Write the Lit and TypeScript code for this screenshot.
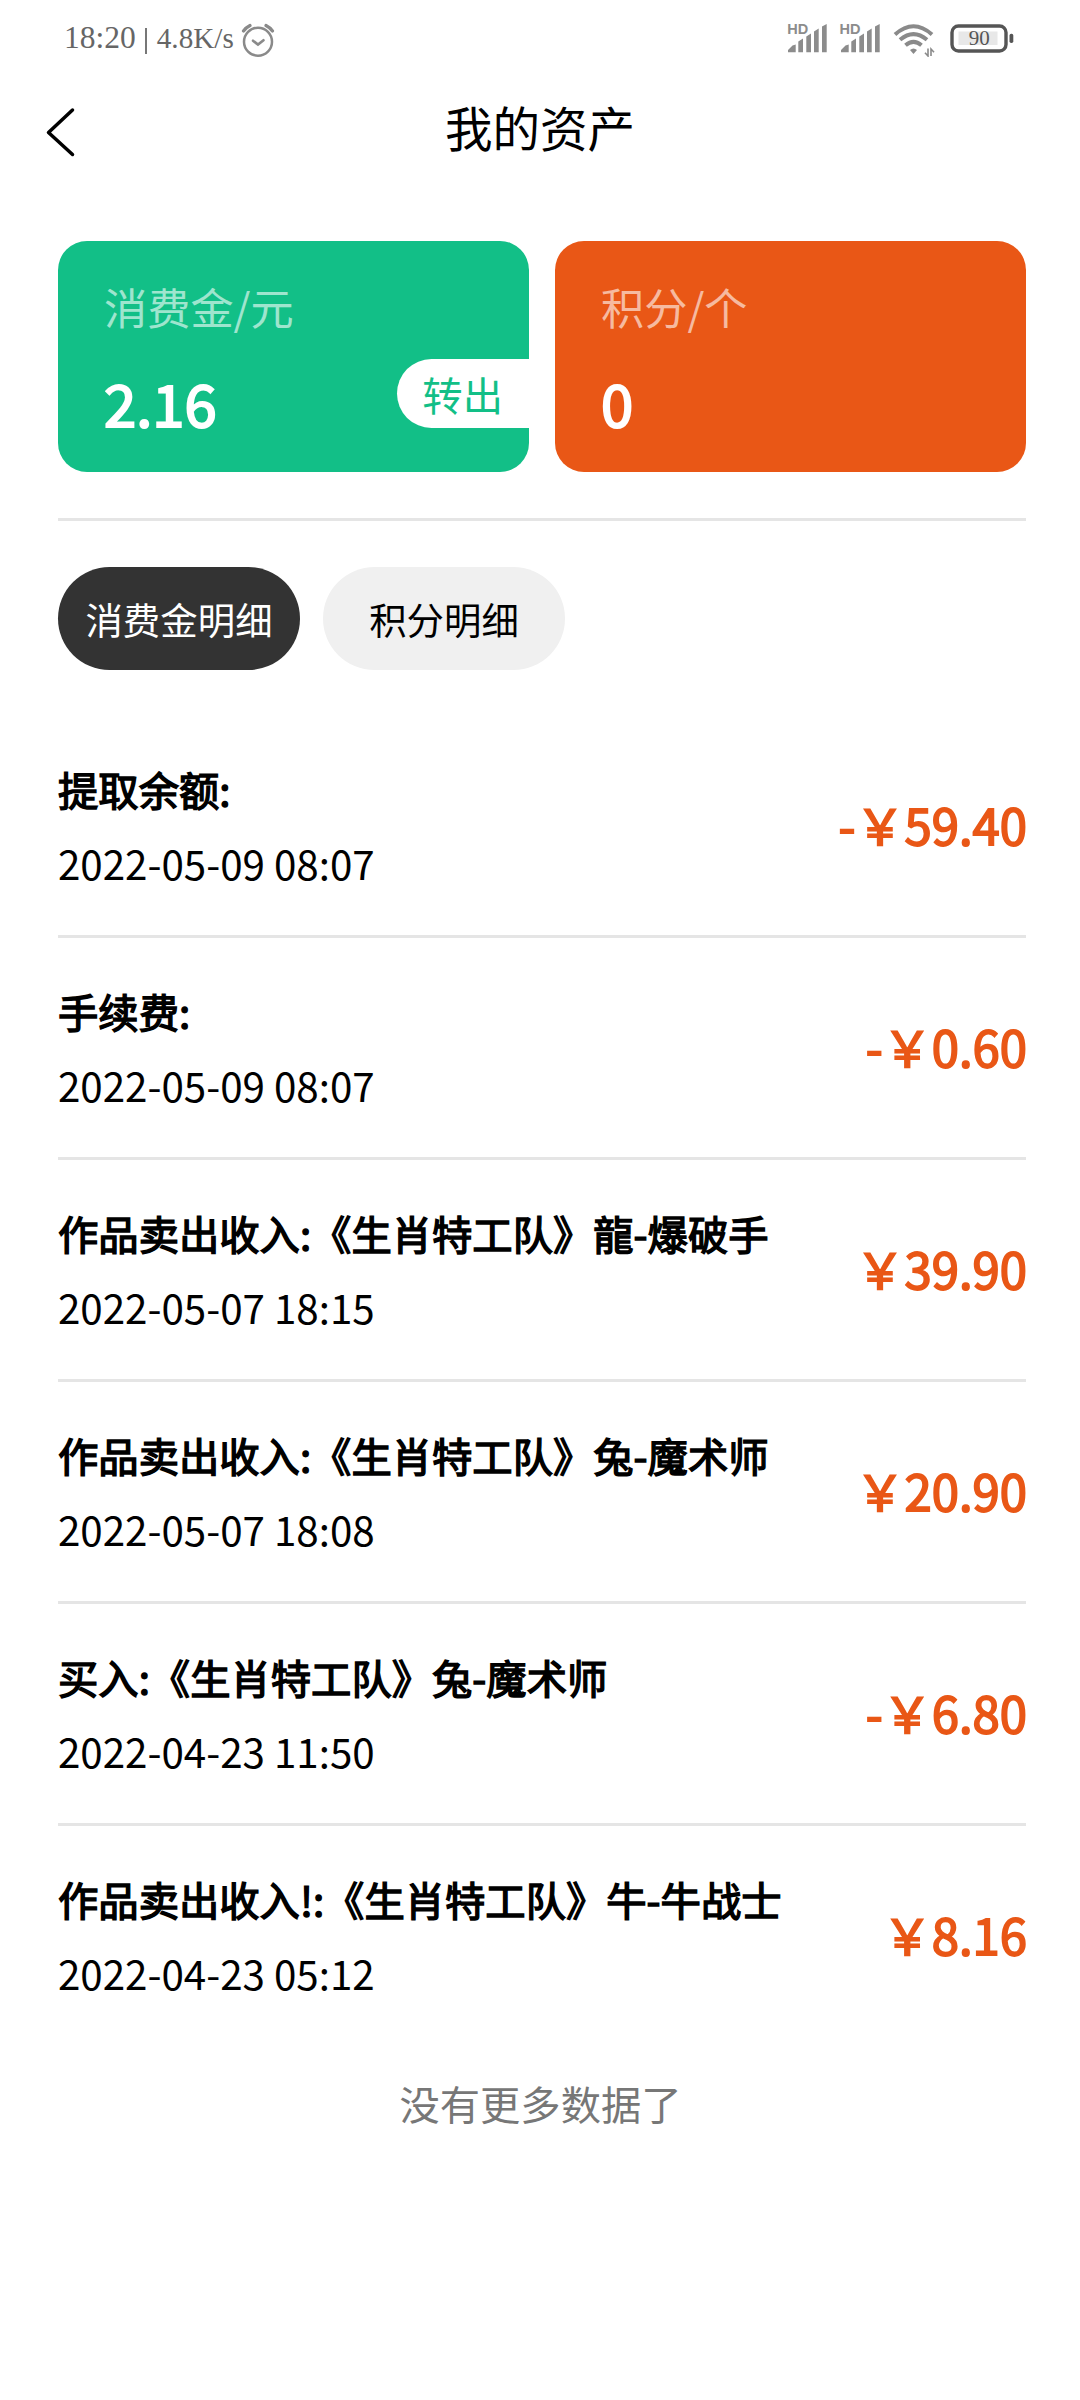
import { LitElement, html, css, svg } from "lit";
import { customElement, property, state } from "lit/decorators.js";
import { classMap } from "lit/directives/class-map.js";

interface Entry {
  title: string;
  time: string;
  amount: string;
}

const ENTRIES: Entry[] = [
  { title: "提取余额:", time: "2022-05-09 08:07", amount: "-￥59.40" },
  { title: "手续费:", time: "2022-05-09 08:07", amount: "-￥0.60" },
  { title: "作品卖出收入:《生肖特工队》龍-爆破手", time: "2022-05-07 18:15", amount: "￥39.90" },
  { title: "作品卖出收入:《生肖特工队》兔-魔术师", time: "2022-05-07 18:08", amount: "￥20.90" },
  { title: "买入:《生肖特工队》兔-魔术师", time: "2022-04-23 11:50", amount: "-￥6.80" },
  { title: "作品卖出收入!:《生肖特工队》牛-牛战士", time: "2022-04-23 05:12", amount: "￥8.16" },
];

const signalBars = svg`
  <path d="M1 29.3 V27 L5.5 22.500 L8.700 21.5 V29.3 Z M11.3 29.3 V18.500 L16 15.500 V29.3 Z M19.3 29.3 V13.500 L24 10.500 V29.3 Z M27 29.3 V8.500 L31.7 5.500 V29.3 Z M35 29.3 V3.500 L39.7 1 V29.3 Z" fill="#8c8c8c"/>`;

@customElement("status-bar")
export class StatusBar extends LitElement {
  static styles = css`
    :host {
      display: flex;
      justify-content: space-between;
      height: 78px;
      padding: 0 66px 0 64px;
      box-sizing: border-box;
      font-family: "Liberation Serif", serif;
      color: #666;
    }
    .left {
      display: flex;
      align-items: baseline;
      line-height: 40px;
      padding-top: 18px;
      white-space: pre;
    }
    .clock { font-size: 31.5px; }
    .bar { width: 1.5px; height: 26px; background: #777; margin: 10px 10px 0 9.5px; align-self: flex-start; }
    .speed { font-size: 29.2px; }
    .alarm { align-self: flex-start; margin: 4px 0 0 7.5px; }
    .right { display: flex; align-items: flex-start; padding-top: 23px; }
    .signal { display: flex; position: relative; width: 41px; height: 31px; margin-right: 11.3px; }
    .hd {
      position: absolute;
      left: 0;
      top: 0;
      font: bold 14.5px/12px "Liberation Sans", sans-serif;
      color: #8c8c8c;
    }
    .wifi { margin: 0 14px 0 1.2px; }
    .battery { display: block; }
    svg { display: block; flex: none; }
  `;

  private signal() {
    return html`<div class="signal">
      <svg width="41" height="31" viewBox="0 0 41 31">${signalBars}</svg>
      <span class="hd">HD</span>
    </div>`;
  }

  render() {
    return html`
      <div class="left">
        <span class="clock">18:20</span>
        <span class="bar"></span>
        <span class="speed">4.8K/s</span>
        <svg class="alarm" width="34" height="36" viewBox="0 0 34 36" fill="none" stroke="#8a8a8a" stroke-linecap="round">
          <circle cx="17" cy="19.7" r="14" stroke-width="2.5"/>
          <path d="M12 18.7 L17 22.6 L22.5 18.2" stroke-width="2.6"/>
          <path d="M2.5 9 Q5 5.5 9 3.5 M31.500 9 Q29 5.500 25 3.500" stroke-width="3.200"/>
        </svg>
      </div>
      <div class="right">
        ${this.signal()} ${this.signal()}
        <svg class="wifi" width="43" height="34" viewBox="0 0 43 34" fill="none" stroke="#8a8a8a" stroke-width="4">
          <path d="M2 11.500 Q20.500 -5 39 11.500"/>
          <path d="M7 16.800 Q20.500 5.500 34 16.800"/>
          <path d="M12.500 22.300 Q20.500 15.500 28.500 22.300"/>
          <path d="M17 27 Q20.500 23.800 24 27 L20.500 31 Z" fill="#8a8a8a" stroke="none"/>
          <path d="M35 25.500 V33 L32 29.800 M38 33 V26 L41 29.200" stroke-width="1.600"/>
        </svg>
        <svg class="battery" width="64" height="31" viewBox="0 0 64 31">
          <rect x="2" y="3" width="54" height="25" rx="6.500" fill="none" stroke="#555" stroke-width="3.400"/>
          <rect x="8.500" y="8.500" width="39" height="13.500" fill="#e8e8e8"/>
          <rect x="59.500" y="10.700" width="3.800" height="9.300" rx="1.700" fill="#555"/>
          <text x="29.300" y="22.200" font-family="Liberation Serif, serif" font-size="21" fill="#555" text-anchor="middle">90</text>
        </svg>
      </div>
    `;
  }
}

@customElement("balance-card")
export class BalanceCard extends LitElement {
  @property() label = "";
  @property() value = "";
  @property() action = "";

  static styles = css`
    :host {
      display: block;
      box-sizing: border-box;
      height: 231px;
      padding: 34px 0 0 46px;
      border-radius: 29px;
      color: #fff;
      position: relative;
    }
    .label { font-size: 43.2px; line-height: 62px; color: rgba(255, 255, 255, 0.6); }
    .value { font-size: 58px; line-height: 84px; margin-top: 23px; -webkit-text-stroke: 0.036em currentColor; }
    .action {
      position: absolute;
      right: 0;
      top: 118px;
      height: 69px;
      box-sizing: border-box;
      padding: 0 26px 0 25px;
      border-radius: 35px 0 0 35px;
      background: #fff;
      color: #12bf87;
      font-size: 40.32px;
      line-height: 70px;
    }
  `;

  render() {
    return html`
      <div class="label">${this.label}</div>
      <div class="value">${this.value}</div>
      ${this.action ? html`<div class="action">${this.action}</div>` : null}
    `;
  }
}

@customElement("entry-row")
export class EntryRow extends LitElement {
  @property({ attribute: false }) entry!: Entry;

  static styles = css`
    :host {
      display: flex;
      align-items: center;
      justify-content: space-between;
      height: 219px;
    }
    .info { display: flex; flex-direction: column; gap: 16px; font-size: 40.32px; line-height: 58px; }
    .title { -webkit-text-stroke: 0.036em currentColor; }
    .amount {
      font-size: 49px;
      line-height: 70px;
      margin-right: -1px;
      padding-bottom: 4px;
      color: #e95716;
      -webkit-text-stroke: 0.036em currentColor;
    }
  `;

  render() {
    return html`
      <div class="info">
        <div class="title">${this.entry.title}</div>
        <div class="time">${this.entry.time}</div>
      </div>
      <div class="amount">${this.entry.amount}</div>
    `;
  }
}

@customElement("app-root")
export class AppRoot extends LitElement {
  @state() private tab = 0;

  static styles = css`
    :host {
      display: block;
      width: 1080px;
      height: 2400px;
      background: #fff;
      color: #000;
      font-family: "Noto Sans CJK SC", sans-serif;
      white-space: nowrap;
      overflow: hidden;
    }
    .nav { display: grid; grid-template-columns: 120px 1fr 120px; height: 163px; }
    .back { margin: 28px 0 0 45px; }
    .heading { text-align: center; font-size: 47.5px; line-height: 70px; padding-top: 14px; }
    .page { padding: 0 54px 0 58px; }
    .cards { display: grid; grid-template-columns: 1fr 1fr; gap: 26px; padding-bottom: 46px; border-bottom: 3px solid #e5e5e5; }
    .green { background: #12bf87; }
    .orange { background: #e95716; }
    .tabs { display: flex; gap: 23px; padding: 46px 0; }
    .tab {
      width: 242px;
      height: 103px;
      border-radius: 52px;
      background: #f0f0f0;
      font-size: 37.44px;
      line-height: 104px;
      text-align: center;
    }
    .active { background: #333; color: #fff; }
    .row + .row { border-top: 3px solid #e5e5e5; }
    .end { text-align: center; font-size: 40.32px; line-height: 58px; color: #777; padding: 29px 0 0 1px; }
  `;

  render() {
    return html`
      <status-bar></status-bar>
      <div class="nav">
        <svg class="back" width="32" height="54" viewBox="0 0 32 54" fill="none" stroke="#000" stroke-width="3.500" stroke-linecap="round" stroke-linejoin="round">
          <path d="M27.500 4 L3.500 26.500 L27.500 48.500"/>
        </svg>
        <div class="heading">我的资产</div>
      </div>
      <div class="page">
        <div class="cards">
          <balance-card class="green" label="消费金/元" value="2.16" action="转出"></balance-card>
          <balance-card class="orange" label="积分/个" value="0"></balance-card>
        </div>
        <div class="tabs">
          ${["消费金明细", "积分明细"].map(
            (name, i) => html`<div
              class=${classMap({ tab: true, active: this.tab === i })}
              @click=${() => (this.tab = i)}
            >${name}</div>`
          )}
        </div>
        <div class="list">
          ${ENTRIES.map((e) => html`<div class="row"><entry-row .entry=${e}></entry-row></div>`)}
        </div>
      </div>
      <div class="end">没有更多数据了</div>
    `;
  }
}
